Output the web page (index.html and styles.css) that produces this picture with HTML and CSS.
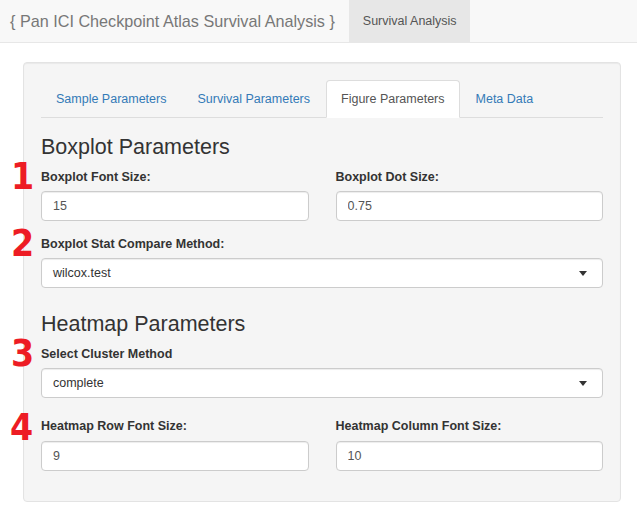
FILE: index.html
```html
<!DOCTYPE html>
<html>
<head>
<meta charset="utf-8">
<title>Pan ICI Checkpoint Atlas Survival Analysis</title>
<link rel="stylesheet" href="styles.css">
</head>
<body>
<nav class="navbar">
  <span class="brand">{ Pan ICI Checkpoint Atlas Survival Analysis }</span>
  <a class="nav-item active">Survival Analysis</a>
</nav>
<main class="page">
  <section class="well">
    <ul class="tabs">
      <li class="tab"><a>Sample Parameters</a></li>
      <li class="tab"><a>Survival Parameters</a></li>
      <li class="tab active"><a>Figure Parameters</a></li>
      <li class="tab"><a>Meta Data</a></li>
    </ul>

    <h3 class="section-title first">Boxplot Parameters</h3>
    <div class="row group-a">
      <div class="field">
        <span class="marker m1">1</span>
        <label class="label">Boxplot Font Size:</label>
        <input class="input" type="text" value="15">
      </div>
      <div class="field">
        <label class="label">Boxplot Dot Size:</label>
        <input class="input" type="text" value="0.75">
      </div>
    </div>
    <div class="field select-field">
      <span class="marker m2">2</span>
      <label class="label">Boxplot Stat Compare Method:</label>
      <div class="select"><span>wilcox.test</span><i class="caret"></i></div>
    </div>

    <h3 class="section-title second">Heatmap Parameters</h3>
    <div class="field select-field">
      <span class="marker m3">3</span>
      <label class="label">Select Cluster Method</label>
      <div class="select"><span>complete</span><i class="caret"></i></div>
    </div>
    <div class="row group-b">
      <div class="field">
        <span class="marker m4">4</span>
        <label class="label">Heatmap Row Font Size:</label>
        <input class="input" type="text" value="9">
      </div>
      <div class="field">
        <label class="label">Heatmap Column Font Size:</label>
        <input class="input" type="text" value="10">
      </div>
    </div>
  </section>
</main>
</body>
</html>
```

FILE: styles.css
```css
* { box-sizing: border-box; }

html, body {
  margin: 0;
  padding: 0;
  background: #ffffff;
  font-family: "Liberation Sans", Arial, sans-serif;
  font-size: 12.5px;
  color: #333;
}

.navbar {
  display: flex;
  align-items: stretch;
  height: 43px;
  background: #f8f8f8;
  border-bottom: 1px solid #e7e7e7;
}

.brand {
  font-size: 16.2px;
  line-height: 42px;
  color: #777;
  padding: 0 14px 0 10px;
}

.nav-item {
  font-size: 12.5px;
  line-height: 42px;
  color: #555;
  padding: 0 13px 0 14px;
}

.nav-item.active { background: #e7e7e7; }

.page {
  padding: 19px 16px 0 23px;
}

.well {
  width: 598px;
  background: #f5f5f5;
  border: 1px solid #e3e3e3;
  border-radius: 4px;
  padding: 17px 17px 16px 17px;
  box-shadow: inset 0 1px 1px rgba(0,0,0,0.05);
}

.tabs {
  display: flex;
  list-style: none;
  margin: 0;
  padding: 0;
  border-bottom: 1px solid #ddd;
}

.tab {
  margin-right: 1px;
  margin-bottom: -1px;
}

.tab a {
  display: block;
  padding: 9px 14px;
  line-height: 18px;
  color: #337ab7;
  border: 1px solid transparent;
  border-radius: 4px 4px 0 0;
}

.tab.active a {
  color: #555;
  background: #fff;
  border-color: #ddd;
  border-bottom-color: transparent;
}

.section-title {
  font-size: 21.5px;
  font-weight: 500;
  line-height: 24px;
  color: #333;
  margin: 17px 0 9px 0;
}

.section-title.second { margin-top: 24px; margin-bottom: 9px; }

.row {
  display: grid;
  grid-template-columns: 1fr 1fr;
  column-gap: 27px;
}

.field {
  position: relative;
  margin-bottom: 14px;
}

.group-b { padding-top: 5px; }

.group-b .label { margin-bottom: 6px; }

.label {
  display: block;
  font-weight: bold;
  line-height: 18px;
  margin-bottom: 5px;
  color: #333;
}

.input {
  display: block;
  width: 100%;
  height: 30px;
  padding: 0 11px;
  font-family: inherit;
  font-size: 12.5px;
  color: #555;
  background: #fff;
  border: 1px solid #ccc;
  border-radius: 4px;
  box-shadow: inset 0 1px 1px rgba(0,0,0,0.075);
  outline: none;
}

.select {
  position: relative;
  display: flex;
  align-items: center;
  height: 30px;
  padding: 0 11px;
  color: #333;
  background: #fff;
  border: 1px solid #ccc;
  border-radius: 4px;
  box-shadow: inset 0 1px 1px rgba(0,0,0,0.075);
}

.caret {
  position: absolute;
  right: 15px;
  top: 12px;
  width: 0;
  height: 0;
  border-left: 4px solid transparent;
  border-right: 4px solid transparent;
  border-top: 5px solid #333;
}

.marker {
  position: absolute;
  left: -30px;
  top: -11px;
  font-family: "DejaVu Sans Condensed", "DejaVu Sans", sans-serif;
  font-weight: bold;
  font-size: 37px;
  line-height: 40px;
  color: #ed1c24;
}

.marker.m4 { left: -31px; top: -9px; }
```
